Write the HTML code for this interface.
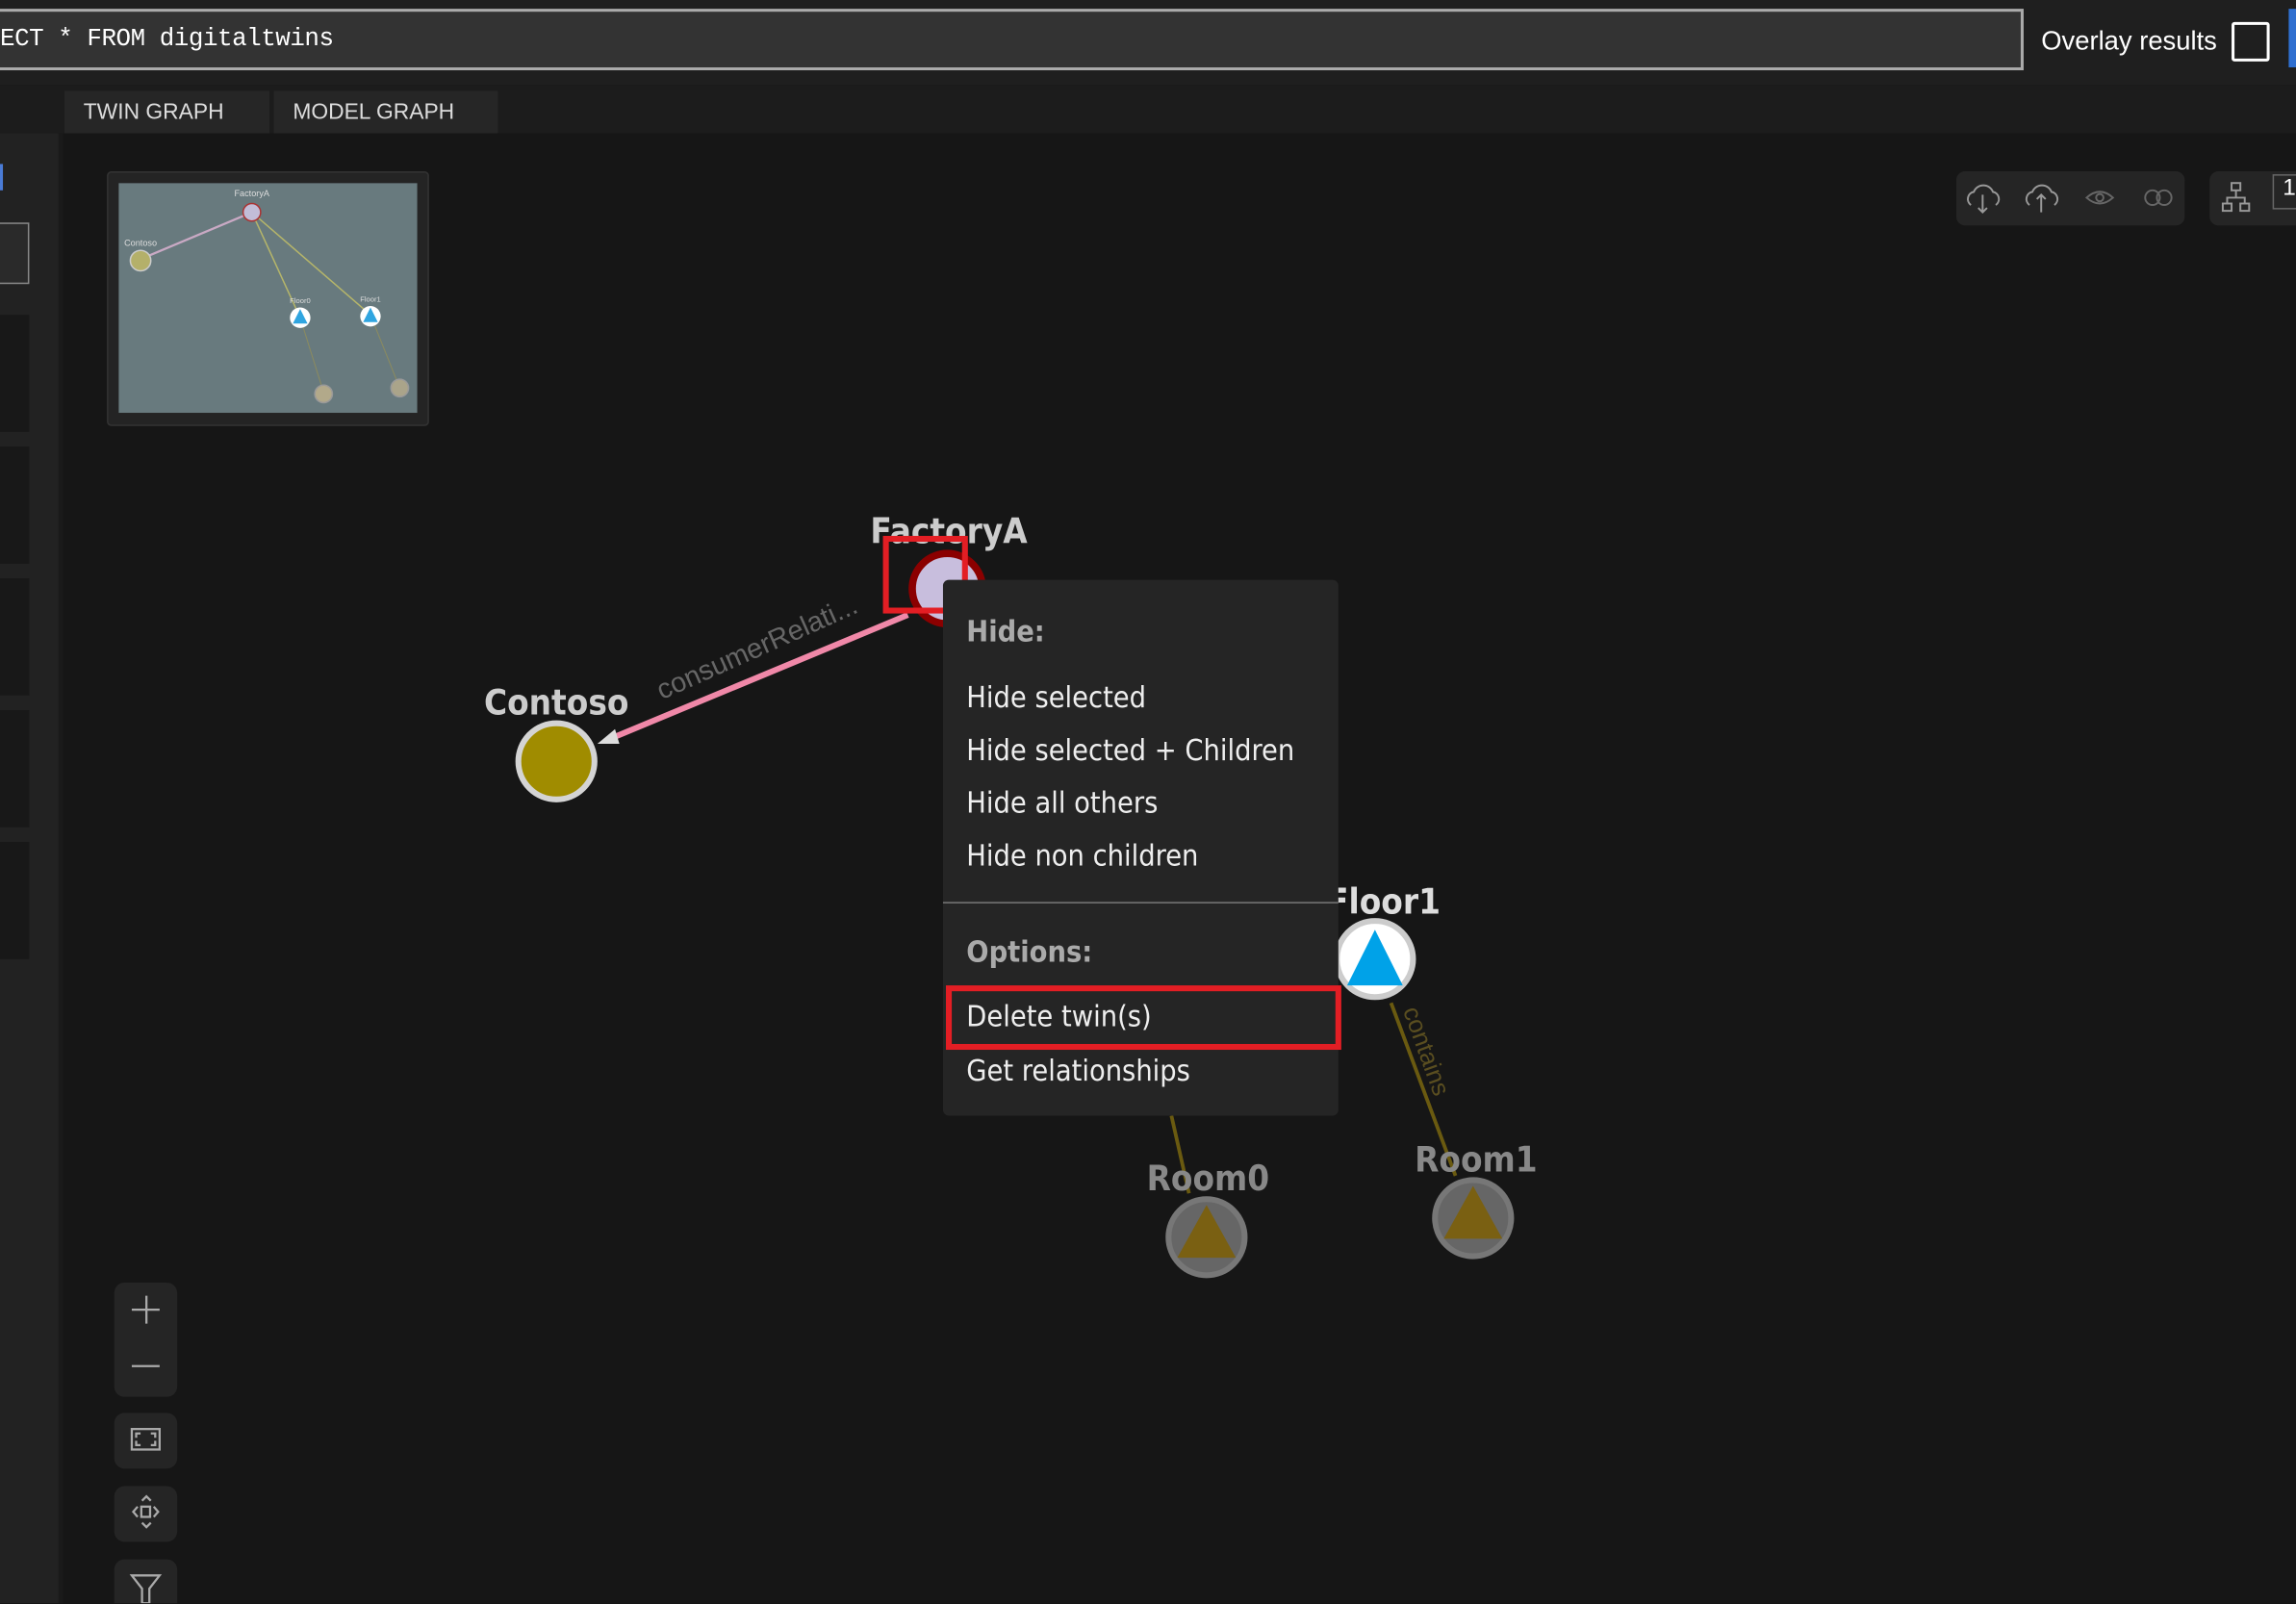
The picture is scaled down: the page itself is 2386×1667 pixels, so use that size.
<!DOCTYPE html>
<html><head><meta charset="utf-8"><style>
html,body{margin:0;padding:0;background:#151515;overflow:hidden;width:2386px;height:1667px}
#w{position:absolute;left:0;top:0;width:1568px;height:1095px;transform:scale(1.52168);transform-origin:0 0;background:#161616;font-family:"Liberation Sans",sans-serif;overflow:hidden}
.a{position:absolute}
.mi{position:absolute;left:16px;font-size:20px;color:#eee;font-family:"DejaVu Sans Condensed","Liberation Sans",sans-serif}
.btn{position:absolute;background:#252525;border-radius:7px}
</style></head><body><div id="w">
<div class="a" style="left:0;top:0;width:1568px;height:58px;background:#1f1f1f"></div>
<div class="a" style="left:-4px;top:6px;width:1382px;height:38px;background:#333;border:2px solid #aaa"></div>
<div class="a" style="left:0;top:18px;font-family:'Liberation Mono',monospace;font-size:17px;color:#fff;letter-spacing:-0.3px">ECT * FROM digitaltwins</div>
<div class="a" style="left:1394px;top:18px;font-size:18px;color:#fff">Overlay results</div>
<div class="a" style="left:1524px;top:15px;width:22px;height:23px;border:2px solid #fff;border-radius:2px"></div>
<div class="a" style="left:1563px;top:6px;width:6px;height:40px;background:#2f6fd0"></div>
<div class="a" style="left:0;top:58px;width:1568px;height:33px;background:#1c1c1c"></div>
<div class="a" style="left:44px;top:62px;width:140px;height:29px;background:#262626"></div>
<div class="a" style="left:187px;top:62px;width:153px;height:29px;background:#262626"></div>
<div class="a" style="left:57px;top:68px;font-size:15px;color:#ddd">TWIN GRAPH</div>
<div class="a" style="left:200px;top:68px;font-size:15px;color:#ddd">MODEL GRAPH</div>
<div class="a" style="left:0;top:91px;width:40px;height:1004px;background:#222"></div>
<div class="a" style="left:40px;top:91px;width:3px;height:1004px;background:#1a1a1a"></div>
<div class="a" style="left:0;top:112px;width:2px;height:18px;background:#4a7bd6"></div>
<div class="a" style="left:-2px;top:152px;width:20px;height:40px;border:1px solid #888;background:#2a2a2a"></div>
<div class="a" style="left:0;top:215px;width:20px;height:80px;background:#181818"></div>
<div class="a" style="left:0;top:305px;width:20px;height:80px;background:#181818"></div>
<div class="a" style="left:0;top:395px;width:20px;height:80px;background:#181818"></div>
<div class="a" style="left:0;top:485px;width:20px;height:80px;background:#181818"></div>
<div class="a" style="left:0;top:575px;width:20px;height:80px;background:#181818"></div>
<!-- minimap -->
<div class="a" style="left:73px;top:117px;width:218px;height:172px;background:#242424;border:1px solid #333;border-radius:3px"></div>
<svg class="a" style="left:81px;top:125px" width="204" height="157">
<rect width="204" height="157" fill="#687a7e"/>
<line x1="91" y1="20" x2="15" y2="52" stroke="#c9a9c4" stroke-width="1.5"/>
<line x1="91" y1="20" x2="124" y2="92" stroke="#b5b56a" stroke-width="1"/>
<line x1="91" y1="20" x2="172" y2="90" stroke="#b5b56a" stroke-width="1"/>
<line x1="124" y1="92" x2="140" y2="143" stroke="#8a8a60" stroke-width="0.7"/>
<line x1="172" y1="90" x2="192" y2="140" stroke="#8a8a60" stroke-width="0.7"/>
<circle cx="91" cy="20" r="6" fill="#c2bdd8" stroke="#a33" stroke-width="1"/>
<circle cx="15" cy="53" r="7" fill="#b4b06a" stroke="#ccc"/>
<circle cx="124" cy="92" r="7" fill="#fff"/><polygon points="124,86 119,96 129,96" fill="#30a5e0"/>
<circle cx="172" cy="91" r="7" fill="#fff"/><polygon points="172,85 167,95 177,95" fill="#30a5e0"/>
<circle cx="140" cy="144" r="6" fill="#b2a98a" stroke="#999"/>
<circle cx="192" cy="140" r="6" fill="#aaa48a" stroke="#999"/>
<text x="91" y="9" font-size="6" fill="#ddd" text-anchor="middle">FactoryA</text>
<text x="15" y="43" font-size="6" fill="#ddd" text-anchor="middle">Contoso</text>
<text x="124" y="82" font-size="5" fill="#ddd" text-anchor="middle">Floor0</text>
<text x="172" y="81" font-size="5" fill="#ddd" text-anchor="middle">Floor1</text>
</svg>
<!-- toolbar -->
<div class="btn" style="left:1336px;top:117px;width:156px;height:37px;border-radius:6px"></div>
<div class="btn" style="left:1509px;top:117px;width:70px;height:37px;border-radius:6px"></div>
<svg class="a" style="left:1336px;top:117px" width="240" height="37" fill="none" stroke="#999" stroke-width="1.3">
<path d="M10 23 a5 5 0 0 1 2-9 a7 7 0 0 1 13 0 a5 5 0 0 1 2 9"/><path d="M18 16v12m-3-3 3 3 3-3"/>
<path d="M50 23 a5 5 0 0 1 2-9 a7 7 0 0 1 13 0 a5 5 0 0 1 2 9"/><path d="M58 28V16m-3 3 3-3 3 3"/>
<path d="M89 18 q9-8 18 0 q-9 8-18 0z" stroke="#666"/><circle cx="98" cy="18" r="2.5" stroke="#666"/>
<circle cx="134" cy="18" r="5" stroke="#666"/><circle cx="142" cy="18" r="5" stroke="#666"/>
<rect x="188" y="8" width="6" height="5"/><rect x="182" y="22" width="6" height="5"/><rect x="194" y="22" width="6" height="5"/><path d="M191 13v5M185 22v-4h12v4"/>
</svg>
<div class="a" style="left:1552px;top:119px;width:20px;height:22px;border:1px solid #666;color:#fff;font-size:16px;padding-left:6px">1</div>
<!-- graph -->
<svg class="a" style="left:0;top:0" width="1568" height="1095">
<line x1="620" y1="420" x2="418" y2="504" stroke="#f088a8" stroke-width="4"/>
<polygon points="408,508 420,498 423,508" fill="#ddd"/>
<text transform="translate(452,478) rotate(-24)" font-size="19" fill="#666" font-family="Liberation Sans">consumerRelati...</text>
<line x1="950" y1="685" x2="994" y2="803" stroke="#6a5a10" stroke-width="2.5"/>
<line x1="800" y1="762" x2="812" y2="815" stroke="#6a5a10" stroke-width="2.5"/>
<text transform="translate(958,690) rotate(70)" font-size="17" fill="#5a4e20">contains</text>
<circle cx="380" cy="520" r="26" fill="#a08c00" stroke="#d4d4d4" stroke-width="4"/>
<text x="380" y="488" font-size="24" font-weight="bold" fill="#ccc" text-anchor="middle" font-family="DejaVu Sans Condensed">Contoso</text>
<circle cx="647" cy="402" r="24" fill="#c8bedd" stroke="#8b0000" stroke-width="5"/>
<text x="648" y="371" font-size="24" font-weight="bold" fill="#ccc" text-anchor="middle" font-family="DejaVu Sans Condensed">FactoryA</text>
<rect x="605" y="368" width="54" height="49" fill="none" stroke="#e31e24" stroke-width="4"/>
<circle cx="939" cy="655" r="26" fill="#fff" stroke="#ccc" stroke-width="4"/>
<polygon points="939,635 920,673 958,673" fill="#00a2e8"/>
<text x="945" y="624" font-size="24" font-weight="bold" fill="#ddd" text-anchor="middle" font-family="DejaVu Sans Condensed">Floor1</text>
<circle cx="824" cy="845" r="26" fill="#666" stroke="#777" stroke-width="4"/>
<polygon points="824,823 804,859 844,859" fill="#7a6012"/>
<text x="825" y="813" font-size="24" font-weight="bold" fill="#888" text-anchor="middle" font-family="DejaVu Sans Condensed">Room0</text>
<circle cx="1006" cy="832" r="26" fill="#666" stroke="#777" stroke-width="4"/>
<polygon points="1006,810 986,846 1026,846" fill="#7a6012"/>
<text x="1008" y="800" font-size="24" font-weight="bold" fill="#888" text-anchor="middle" font-family="DejaVu Sans Condensed">Room1</text>
</svg>
<!-- menu -->
<div class="a" style="left:644px;top:396px;width:270px;height:366px;background:#252525;border-radius:4px">
<div class="mi" style="top:23px;color:#aaa;font-weight:bold">Hide:</div>
<div class="mi" style="top:68px">Hide selected</div>
<div class="mi" style="top:104px">Hide selected + Children</div>
<div class="mi" style="top:140px">Hide all others</div>
<div class="mi" style="top:176px">Hide non children</div>
<div class="a" style="left:0;top:220px;width:270px;height:1px;background:#777"></div>
<div class="mi" style="top:242px;color:#aaa;font-weight:bold">Options:</div>
<div class="a" style="left:2px;top:277px;width:262px;height:36px;border:4px solid #e31e24"></div>
<div class="mi" style="top:286px">Delete twin(s)</div>
<div class="mi" style="top:323px">Get relationships</div>
</div>
<!-- zoom controls -->
<div class="btn" style="left:78px;top:876px;width:43px;height:78px"></div>
<div class="btn" style="left:78px;top:965px;width:43px;height:38px"></div>
<div class="btn" style="left:78px;top:1015px;width:43px;height:38px"></div>
<div class="btn" style="left:78px;top:1065px;width:43px;height:40px"></div>
<svg class="a" style="left:78px;top:876px" width="43" height="219" fill="none" stroke="#aaa" stroke-width="1.5">
<path d="M22 9v19M12 18.5h19"/>
<path d="M12 57h19"/>
<rect x="12" y="100" width="19" height="14"/><path d="M15 106v-3h3M28 106v-3h-3M15 108v3h3M28 108v3h-3"/>
<rect x="18.5" y="153" width="6" height="7"/><path d="M19 149l3-3 3 3M19 164l3 3 3-3M16 153l-3 3.5 3 3.5M27 153l3 3.5-3 3.5"/>
<path d="M12 200h19l-7 9v10h-5v-10z"/>
</svg>
</div></body></html>
